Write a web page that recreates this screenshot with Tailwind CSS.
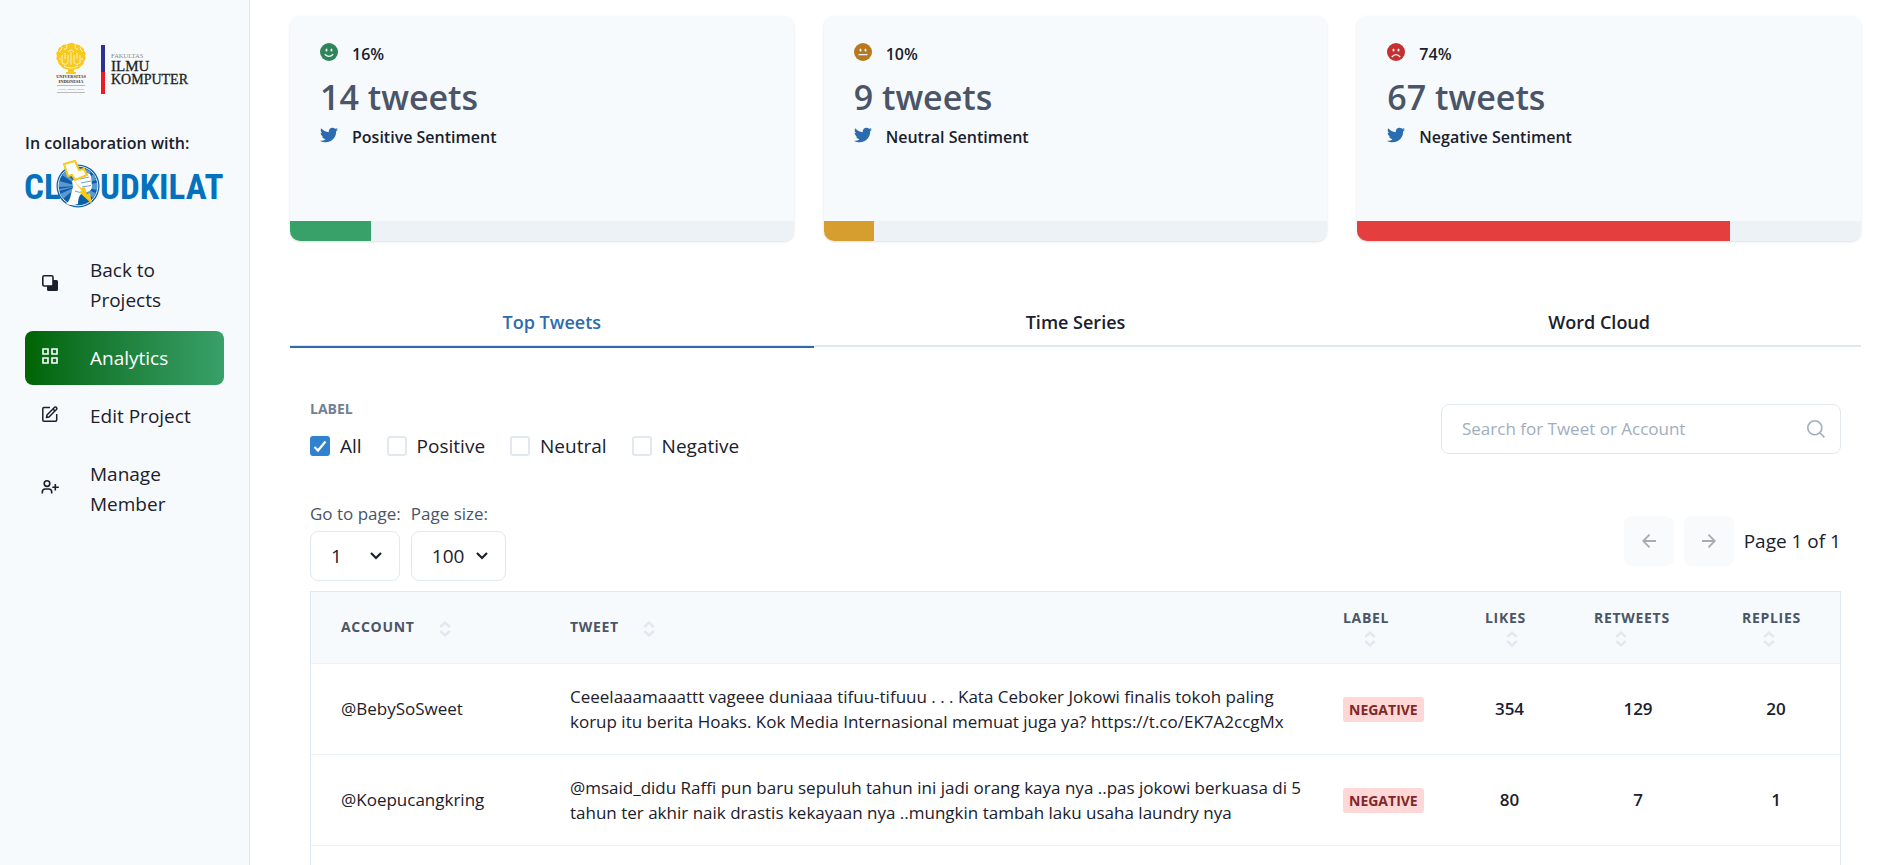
<!DOCTYPE html>
<html lang="en">
<head>
<meta charset="utf-8">
<meta name="viewport" content="width=device-width, initial-scale=1">
<title>Sentiment Analytics</title>
<script src="https://cdn.jsdelivr.net/npm/@tailwindcss/browser@4"></script>
</head>
<body class="bg-white font-['Open_Sans','Noto_Sans',sans-serif] text-[#1a202c]">
<svg class="hidden" aria-hidden="true">
  <symbol id="twitter" viewBox="0 0 24 24"><path fill="currentColor" d="M23.954 4.569c-.885.389-1.83.654-2.825.775 1.014-.611 1.794-1.574 2.163-2.723-.951.555-2.005.959-3.127 1.184-.896-.959-2.173-1.559-3.591-1.559-2.717 0-4.92 2.203-4.92 4.917 0 .39.045.765.127 1.124C7.691 8.094 4.066 6.13 1.64 3.161c-.427.722-.666 1.561-.666 2.475 0 1.71.87 3.213 2.188 4.096-.807-.026-1.566-.248-2.228-.616v.061c0 2.385 1.693 4.374 3.946 4.827-.413.111-.849.171-1.296.171-.314 0-.615-.03-.916-.086.631 1.953 2.445 3.377 4.604 3.417-1.68 1.319-3.809 2.105-6.102 2.105-.39 0-.779-.023-1.17-.067 2.189 1.394 4.768 2.209 7.557 2.209 9.054 0 13.999-7.496 13.999-13.986 0-.209 0-.42-.015-.63.961-.689 1.8-1.56 2.46-2.548l-.047-.02z"/></symbol>
  <symbol id="sort" viewBox="0 0 12 16"><path fill="none" stroke="#e2e8f0" stroke-width="2.4" d="M1.2 6 6 1.6 10.800 6M1.200 10 6 14.400 10.800 10"/></symbol>
</svg>
<div class="flex min-h-screen">
  <aside class="w-[250px] shrink-0 border-r border-[#e2e8f0] bg-[#f7fafc] px-[25px] pt-[40px]">
    <svg class="mx-auto block h-[56px] w-[140px]" viewBox="0 0 140 56" role="img" aria-label="Universitas Indonesia, Fakultas Ilmu Komputer">
      <g fill="#f9c91c">
        <path d="M17 3c2 0 3 1 4 2 2-1 4 0 5 2 2 0 3 2 3 4 2 1 2 3 1 5 1 2 1 4-1 5 0 2-1 4-3 5-1 2-3 3-5 3H11c-2 0-4-1-5-3-2-1-3-3-3-5-2-1-2-3-1-5-1-2-1-4 1-5 0-2 1-4 3-4 1-2 3-3 5-2 1-1 3-2 6-2z"/>
        <path d="M11 28h10l-2 2v2h2v2H11v-2h2v-2z"/>
      </g>
      <g fill="none" stroke="#f7fafc" stroke-width=".8">
        <path d="M7 23V15M7 23q3 3 6 0V15M25 23V15M25 23q-3 3-6 0V15M16 25V12M10 19v-6M22 19v-6M13 12q3-4 6 0M4 12q3-2 3-5M28 12q-3-2-3-5M9 9q3 1 3-4M23 9q-3 1-3-4M4 19h2M26 19h2M9 26q7 4 14 0"/>
      </g>
      <g font-family="Liberation Serif, serif" fill="#333">
        <text x="16" y="38" font-size="4.4" font-weight="700" text-anchor="middle">UNIVERSITAS</text>
        <text x="16" y="43" font-size="4.4" font-weight="700" text-anchor="middle">INDONESIA</text>
        <text x="16" y="50" font-size="2.6" text-anchor="middle" fill="#777">Veritas, Probitas, Iustitia</text>
        <path stroke="#bbb" stroke-width="1" d="M2 45.500h28M2 52.500h28"/>
        <text x="56" y="18" font-size="6.5" fill="#888">FAKULTAS</text>
        <text x="56" y="31" font-size="15" fill="#222" stroke="#222" stroke-width=".3">ILMU</text>
        <text x="56" y="44" font-size="14" fill="#222" stroke="#222" stroke-width=".3">KOMPUTER</text>
      </g>
      <path fill="#2e3192" d="M46 5h4v27h-4z"/><path fill="#ed1c24" d="M46 32h4v22h-4z"/>
    </svg>
    <p class="mt-[34px] text-[16px] leading-[26px] font-semibold">In collaboration with:</p>
    <svg class="mt-1 block h-[50px] w-full" viewBox="0 0 199 50" role="img" aria-label="CloudKilat">
      <g fill="#0471bd" font-family="'Roboto Condensed', 'Liberation Sans Narrow', 'Open Sans Condensed', 'DejaVu Sans Condensed'" font-weight="700" font-size="35">
        <text x="-1" y="39">CL</text><text x="75" y="39">UDKILAT</text>
      </g>
      <circle cx="53" cy="26" r="21.500" fill="#0b5ea8"/>
      <circle cx="53" cy="26" r="19.800" fill="none" stroke="#fff" stroke-width=".9"/>
      <path fill="#5c97cf" d="M53 26 34 21v6zM53 26 37 15l3-4zM53 26 71 20l-2-6zM53 26 72 30v-7zM53 26 68 38l3-5zM53 26 35 34l3 5zM53 26 61 9l5 3zM53 26 34 29v2z"/>
      <path fill="#fff" d="M41 44q4-3 5-10l2-7-1-6 5-3 8-4q5-2 6 2l1 10q0 5-5 6l-6 2q-3 3-3 10-6 2-12 0z"/>
      <path fill="none" stroke="#5c97cf" stroke-width=".9" d="m55 19 9-2M56 23l10-2M57 27l9-1.500M50 31q5 3 9 0"/>
      <path fill="#fff" stroke="#f8ca1d" stroke-width="2" stroke-linejoin="miter" d="m39 4 11-3 4 9 5-1 3 6-12 5-3-5-4 1z"/>
      <path fill="#f8ca1d" d="m48 20 8 8 4-1 2 7 3-1 2 11-13-12 3-1z"/>
    </svg>
    <nav class="mt-[33px] flex flex-col gap-1 text-[19px] leading-[30px]">
      <a href="#" class="flex items-center gap-8 rounded-lg py-3 pl-[17px]">
        <svg class="mb-1 size-4 shrink-0" viewBox="0 0 16 16"><path fill="#1a202c" d="M11 5h3.500q1.500 0 1.500 1.500v8q0 1.500-1.500 1.500h-8Q5 16 5 14.500V11h6z"/><rect x=".800" y=".800" width="10.200" height="10.200" rx="1.500" fill="#f7fafc" stroke="#1a202c" stroke-width="1.600"/></svg>
        <span>Back to Projects</span></a>
      <a href="#" class="flex items-center gap-8 rounded-lg bg-linear-to-r from-[#006400] to-[#38a169] py-3 pl-[17px] text-white" aria-current="page">
        <svg class="mb-1 size-4 shrink-0" viewBox="0 0 16 16" fill="none" stroke="currentColor" stroke-width="1.600"><path d="M1 1h5v5H1zM10 1h5v5h-5zM1 10h5v5H1zM10 10h5v5h-5z"/></svg>
        <span>Analytics</span></a>
      <a href="#" class="flex items-center gap-8 rounded-lg py-3 pl-[17px]">
        <svg class="mb-1 size-4 shrink-0" viewBox="0 0 16 16" fill="none" stroke="currentColor" stroke-width="1.500" stroke-linejoin="round"><path d="M8 1.500H2q-1.200 0-1.200 1.200V14q0 1.200 1.200 1.200h11.500q1.200 0 1.200-1.200V8"/><path d="m5 9 7.400-7.600q1-.9 2 0 .9 1 0 2L7 11l-2.500.5zM11 3l2 2"/></svg>
        <span>Edit Project</span></a>
      <a href="#" class="flex items-center gap-8 rounded-lg py-3 pl-[17px]">
        <svg class="mb-1 size-4 shrink-0 overflow-visible" viewBox="0 0 16 16" fill="none" stroke="currentColor" stroke-width="1.600"><circle cx="5" cy="4.600" r="2.800"/><path d="M.3 14.500V13q0-3 3-3h3.400q3 0 3 3v1.500M13.300 5v6.500M10.300 8.200h6.500"/></svg>
        <span>Manage Member</span></a>
    </nav>
  </aside>

  <main class="flex min-w-0 flex-1 flex-col pt-4 pr-[37px] pl-[40px]">
    <section class="grid grid-cols-3 gap-[30px]">
      <article class="flex h-[225px] flex-col overflow-hidden rounded-[10px] bg-[#f7fafc] shadow-sm">
        <div class="flex-1 px-[30px] pt-[25px]">
          <p class="flex items-center gap-[14px] text-[16px] leading-[26px] font-semibold">
            <svg class="mb-1 size-[18px]" viewBox="0 0 18 18"><circle cx="9" cy="9" r="9" fill="#2f855a"/><g fill="#f7fafc"><ellipse cx="6.500" cy="7" rx="1" ry="1.500"/><ellipse cx="11.500" cy="7" rx="1" ry="1.500"/></g><path d="M4.800 11.300q4.200 4.200 8.400 0" fill="none" stroke="#f7fafc" stroke-width="1.300"/></svg>16%</p>
          <h2 class="mt-[7px] text-[34px] leading-[46px] font-semibold text-[#4a5568]">14 tweets</h2>
          <p class="mt-[4px] flex items-center gap-[14px] text-[16px] leading-[26px] font-semibold"><svg class="mb-1 size-[18px] text-[#2b6cb0]"><use href="#twitter"/></svg>Positive Sentiment</p>
        </div>
        <div class="h-5 bg-[#edf2f7]" role="progressbar" aria-label="Positive" aria-valuenow="16"><div class="h-full bg-[#38a169]" style="width:16%"></div></div>
      </article>
      <article class="flex h-[225px] flex-col overflow-hidden rounded-[10px] bg-[#f7fafc] shadow-sm">
        <div class="flex-1 px-[30px] pt-[25px]">
          <p class="flex items-center gap-[14px] text-[16px] leading-[26px] font-semibold">
            <svg class="mb-1 size-[18px]" viewBox="0 0 18 18"><circle cx="9" cy="9" r="9" fill="#b7791f"/><g fill="#f7fafc"><ellipse cx="6.500" cy="7" rx="1" ry="1.500"/><ellipse cx="11.500" cy="7" rx="1" ry="1.500"/></g><path d="M4.500 11.600h9" stroke="#f7fafc" stroke-width="1.300"/></svg>10%</p>
          <h2 class="mt-[7px] text-[34px] leading-[46px] font-semibold text-[#4a5568]">9 tweets</h2>
          <p class="mt-[4px] flex items-center gap-[14px] text-[16px] leading-[26px] font-semibold"><svg class="mb-1 size-[18px] text-[#2b6cb0]"><use href="#twitter"/></svg>Neutral Sentiment</p>
        </div>
        <div class="h-5 bg-[#edf2f7]" role="progressbar" aria-label="Neutral" aria-valuenow="10"><div class="h-full bg-[#d69e2e]" style="width:10%"></div></div>
      </article>
      <article class="flex h-[225px] flex-col overflow-hidden rounded-[10px] bg-[#f7fafc] shadow-sm">
        <div class="flex-1 px-[30px] pt-[25px]">
          <p class="flex items-center gap-[14px] text-[16px] leading-[26px] font-semibold">
            <svg class="mb-1 size-[18px]" viewBox="0 0 18 18"><circle cx="9" cy="9" r="9" fill="#c53030"/><g fill="#f7fafc"><ellipse cx="6.500" cy="7" rx="1" ry="1.500"/><ellipse cx="11.500" cy="7" rx="1" ry="1.500"/></g><path d="M4.800 14q4.200-4.600 8.400 0" fill="none" stroke="#f7fafc" stroke-width="1.300"/></svg>74%</p>
          <h2 class="mt-[7px] text-[34px] leading-[46px] font-semibold text-[#4a5568]">67 tweets</h2>
          <p class="mt-[4px] flex items-center gap-[14px] text-[16px] leading-[26px] font-semibold"><svg class="mb-1 size-[18px] text-[#2b6cb0]"><use href="#twitter"/></svg>Negative Sentiment</p>
        </div>
        <div class="h-5 bg-[#edf2f7]" role="progressbar" aria-label="Negative" aria-valuenow="74"><div class="h-full bg-[#e53e3e]" style="width:74%"></div></div>
      </article>
    </section>

    <div class="mt-[56px] grid grid-cols-3 border-b-2 border-[#e2e8f0] text-[18px] leading-[28px] font-semibold" role="tablist">
      <button class="-mb-[3px] border-b-2 border-[#2b6cb0] pt-[11px] pb-[10px] text-[#2b6cb0]" role="tab" aria-selected="true">Top Tweets</button>
      <button class="-mb-[3px] pt-[11px] pb-3" role="tab" aria-selected="false">Time Series</button>
      <button class="-mb-[3px] pt-[11px] pb-3" role="tab" aria-selected="false">Word Cloud</button>
    </div>

    <section class="flex flex-1 flex-col px-5 pt-[49px]">
      <div class="flex items-center justify-between">
        <fieldset>
          <legend class="text-[14px] leading-[26px] font-bold text-[#718096]">LABEL</legend>
          <div class="mt-[9px] flex gap-[25px] text-[19px] leading-[30px]">
            <label class="flex items-center gap-[10px]"><span class="relative flex size-5"><input type="checkbox" checked class="size-5 appearance-none rounded-[3px] border-2 border-[#e2e8f0] checked:border-[#3182ce] checked:bg-[#3182ce]"><svg class="pointer-events-none absolute inset-0 size-5" viewBox="0 0 20 20" fill="none" stroke="#fff" stroke-width="2.200"><path d="m4.500 11 3.500 3.500L15.500 5.500"/></svg></span>All</label>
            <label class="flex items-center gap-[10px]"><input type="checkbox" class="size-5 appearance-none rounded-[3px] border-2 border-[#e2e8f0]">Positive</label>
            <label class="flex items-center gap-[10px]"><input type="checkbox" class="size-5 appearance-none rounded-[3px] border-2 border-[#e2e8f0]">Neutral</label>
            <label class="flex items-center gap-[10px]"><input type="checkbox" class="size-5 appearance-none rounded-[3px] border-2 border-[#e2e8f0]">Negative</label>
          </div>
        </fieldset>
        <label class="flex h-[50px] w-[400px] items-center rounded-lg border border-[#e2e8f0] pr-[15px] pl-5">
          <input type="search" aria-label="Search tweets" placeholder="Search for Tweet or Account" class="min-w-0 flex-1 text-[17px] outline-none placeholder:text-[#a0aec0]">
          <svg class="size-[18px]" viewBox="0 0 18 18" fill="none" stroke="#a0aec0" stroke-width="1.600"><circle cx="7.800" cy="7.800" r="7"/><path d="m12.800 12.800 4.600 4.600"/></svg>
        </label>
      </div>

      <div class="mt-[40px] flex items-center justify-between">
        <div class="flex gap-[10px]">
          <div><label for="page" class="block text-[17px] leading-[26px] text-[#4a5568]">Go to page:</label>
            <div class="relative mt-1 w-[90px]"><select id="page" class="h-[50px] w-full appearance-none rounded-lg border border-[#e2e8f0] pl-5 text-[19px]"><option>1</option></select><svg class="pointer-events-none absolute top-[21px] right-[18px] h-[8px] w-[12px]" viewBox="0 0 12 8" fill="none" stroke="currentColor" stroke-width="2.200"><path d="m1 1 5 5 5-5"/></svg></div></div>
          <div><label for="size" class="block text-[17px] leading-[26px] text-[#4a5568]">Page size:</label>
            <div class="relative mt-1 w-[95px]"><select id="size" class="h-[50px] w-full appearance-none rounded-lg border border-[#e2e8f0] pl-5 text-[19px]"><option>100</option></select><svg class="pointer-events-none absolute top-[21px] right-[18px] h-[8px] w-[12px]" viewBox="0 0 12 8" fill="none" stroke="currentColor" stroke-width="2.200"><path d="m1 1 5 5 5-5"/></svg></div></div>
        </div>
        <div class="flex items-center gap-[10px] text-[19px] leading-[30px]">
          <button disabled aria-label="Previous page" class="flex size-[50px] items-center justify-center rounded-lg bg-[#f9fafc]"><svg class="size-[14px]" viewBox="0 0 14 14" fill="none" stroke="#a8abb0" stroke-width="1.800"><path d="M14 7H1M7.500.700 1.200 7l6.300 6.300"/></svg></button>
          <button disabled aria-label="Next page" class="flex size-[50px] items-center justify-center rounded-lg bg-[#f9fafc]"><svg class="size-[14px]" viewBox="0 0 14 14" fill="none" stroke="#a8abb0" stroke-width="1.800"><path d="M0 7h13M6.500.700 12.800 7l-6.300 6.300"/></svg></button>
          <span>Page 1 of 1</span>
        </div>
      </div>

      <div class="mt-[10px] flex-1 border border-b-0 border-[#e2e8f0]">
        <table class="w-full table-fixed text-left text-[17px] leading-[25px]">
          <colgroup><col class="w-[229px]"><col><col class="w-[142px]"><col class="w-[109px]"><col class="w-[148px]"><col class="w-[128px]"></colgroup>
          <thead class="border-b border-[#edf2f7] bg-[#f7fafc] text-[14px] leading-[20px] font-bold tracking-wider text-[#4a5568]">
            <tr class="h-[71px]">
              <th class="pl-[30px]">ACCOUNT<svg class="ml-6 inline h-[16px] w-[12px]"><use href="#sort"/></svg></th>
              <th class="pl-[30px]">TWEET<svg class="ml-6 inline h-[16px] w-[12px]"><use href="#sort"/></svg></th>
              <th class="pl-[30px]">LABEL<svg class="mt-[3px] ml-[21px] block h-[16px] w-[12px]"><use href="#sort"/></svg></th>
              <th class="pl-[30px]">LIKES<svg class="mt-[3px] ml-[21px] block h-[16px] w-[12px]"><use href="#sort"/></svg></th>
              <th class="pl-[30px]">RETWEETS<svg class="mt-[3px] ml-[21px] block h-[16px] w-[12px]"><use href="#sort"/></svg></th>
              <th class="pl-[30px]">REPLIES<svg class="mt-[3px] ml-[21px] block h-[16px] w-[12px]"><use href="#sort"/></svg></th>
            </tr>
          </thead>
          <tbody>
            <tr class="border-b border-[#edf2f7]">
              <td class="pl-[30px]">@BebySoSweet</td>
              <td class="py-5 pl-[30px]">Ceeelaaamaaattt vageee duniaaa tifuu-tifuuu . . . Kata Ceboker Jokowi finalis tokoh paling<br>korup itu berita Hoaks. Kok Media Internasional memuat juga ya? https://t.co/EK7A2ccgMx</td>
              <td class="pl-[30px]"><span class="inline-block rounded-[3px] bg-[#fed7d7] px-[6px] text-[14px] font-bold text-[#822727]">NEGATIVE</span></td>
              <td class="text-center font-semibold">354</td><td class="text-center font-semibold">129</td><td class="text-center font-semibold">20</td>
            </tr>
            <tr class="border-b border-[#edf2f7]">
              <td class="pl-[30px]">@Koepucangkring</td>
              <td class="py-5 pl-[30px]">@msaid_didu Raffi pun baru sepuluh tahun ini jadi orang kaya nya ..pas jokowi berkuasa di 5<br>tahun ter akhir naik drastis kekayaan nya ..mungkin tambah laku usaha laundry nya</td>
              <td class="pl-[30px]"><span class="inline-block rounded-[3px] bg-[#fed7d7] px-[6px] text-[14px] font-bold text-[#822727]">NEGATIVE</span></td>
              <td class="text-center font-semibold">80</td><td class="text-center font-semibold">7</td><td class="text-center font-semibold">1</td>
            </tr>
          </tbody>
        </table>
      </div>
    </section>
  </main>
</div>
</body>
</html>
